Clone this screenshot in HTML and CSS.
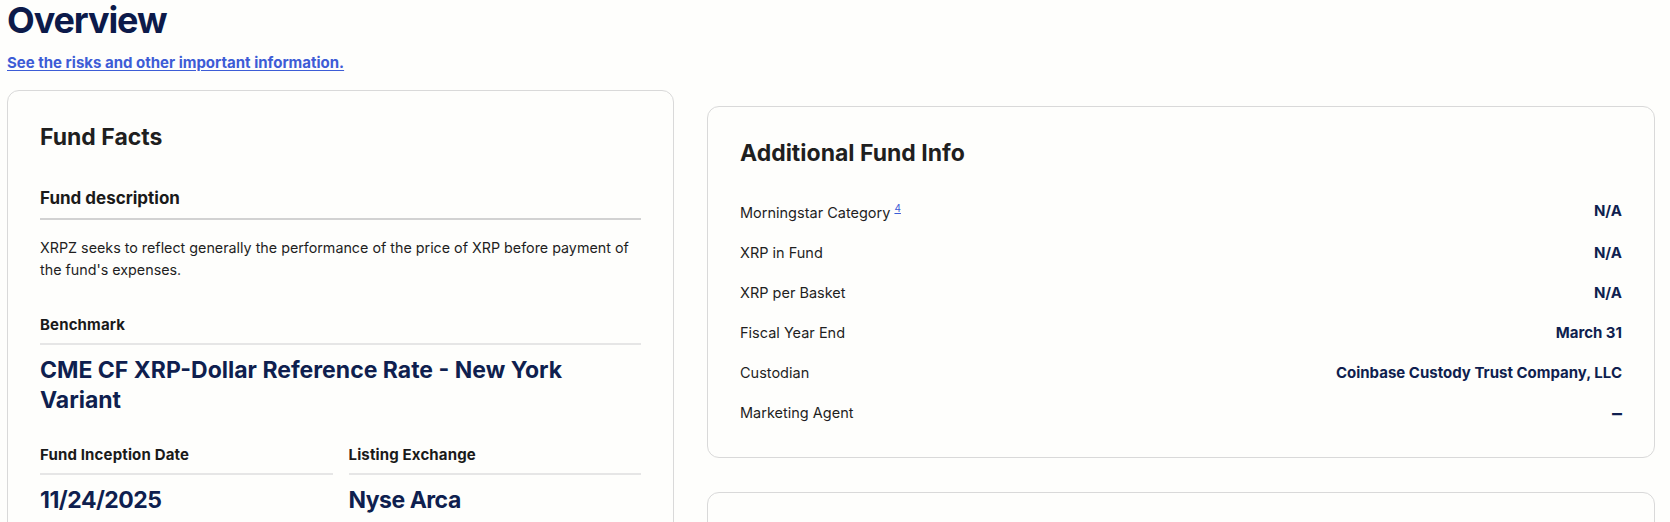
FILE: index.html
```html
<!DOCTYPE html>
<html lang="en">
<head>
<meta charset="utf-8">
<title>Overview</title>
<link rel="stylesheet" href="styles.css">
</head>
<body>
<main class="page">
  <h1 class="page-title">Overview</h1>
  <a class="risk-link" href="#">See the risks and other important information.</a>
  <div class="columns">
    <section class="card facts">
      <h2 class="card-title">Fund Facts</h2>
      <h3 class="section-head">Fund description</h3>
      <p class="desc">XRPZ seeks to reflect generally the performance of the price of XRP before payment of the fund's expenses.</p>
      <div class="fact">
        <div class="fact-label">Benchmark</div>
        <div class="fact-value">CME CF XRP-Dollar Reference Rate - New York Variant</div>
      </div>
      <div class="fact-pair">
        <div class="fact">
          <div class="fact-label">Fund Inception Date</div>
          <div class="fact-value short">11/24/2025</div>
        </div>
        <div class="fact">
          <div class="fact-label">Listing Exchange</div>
          <div class="fact-value short">Nyse Arca</div>
        </div>
      </div>
    </section>
    <div class="side">
      <section class="card info">
        <h2 class="card-title">Additional Fund Info</h2>
        <div class="rows">
          <div class="row"><span class="row-label">Morningstar Category <a class="note" href="#">4</a></span><span class="row-value">N/A</span></div>
          <div class="row"><span class="row-label">XRP in Fund</span><span class="row-value">N/A</span></div>
          <div class="row"><span class="row-label">XRP per Basket</span><span class="row-value">N/A</span></div>
          <div class="row"><span class="row-label">Fiscal Year End</span><span class="row-value">March 31</span></div>
          <div class="row"><span class="row-label">Custodian</span><span class="row-value">Coinbase Custody Trust Company, LLC</span></div>
          <div class="row"><span class="row-label">Marketing Agent</span><span class="row-value dash">–</span></div>
        </div>
      </section>
      <section class="card next"></section>
    </div>
  </div>
</main>
</body>
</html>
```
FILE: styles.css
```css
* { box-sizing: border-box; }
html, body { margin: 0; padding: 0; }
body {
  background: #fefefc;
  font-family: Inter, "Noto Sans", "Liberation Sans", sans-serif;
  color: #1c1c1c;
  overflow: hidden;
}
.page {
  padding: 0 15px 0 7px;
}
.page-title {
  margin: 0;
  font-size: 36px;
  line-height: 40px;
  font-weight: 700;
  color: #0c1a4a;
  letter-spacing: -1.1px;
}
.risk-link {
  display: inline-block;
  margin-top: 13px;
  font-size: 15px;
  line-height: 20px;
  font-weight: 700;
  color: #3d5cd6;
  text-decoration: underline;
  text-underline-offset: 2px;
}
.columns {
  display: grid;
  grid-template-columns: 667px 948px;
  column-gap: 33px;
  margin-top: 17px;
  align-items: start;
}
.card {
  background: #fefefc;
  border: 1px solid #d9d9d9;
  border-radius: 12px;
  padding: 32px;
}
.card-title {
  margin: 0;
  font-size: 23px;
  line-height: 28px;
  font-weight: 700;
  color: #1f1f1f;
}
.facts {
  padding-bottom: 60px;
}
.section-head {
  margin: 35px 0 0;
  font-size: 17px;
  line-height: 24px;
  font-weight: 700;
  color: #1a1a1a;
  padding-bottom: 8px;
  border-bottom: 2px solid #d2d2d2;
}
.desc {
  margin: 17px 0 0;
  font-size: 14.3px;
  line-height: 22px;
  color: #1f1f1f;
}
.fact {
  margin-top: 34px;
}
.fact-label {
  font-size: 15px;
  line-height: 20px;
  font-weight: 700;
  color: #1a1a1a;
  letter-spacing: 0.15px;
  padding-bottom: 8px;
  border-bottom: 2px solid #e6e6e6;
}
.fact-value {
  margin-top: 10px;
  font-size: 23px;
  line-height: 30px;
  font-weight: 700;
  color: #0f1f4f;
  padding-right: 40px;
}
.fact-value.short {
  letter-spacing: -0.5px;
}
.fact-pair {
  display: grid;
  grid-template-columns: 1fr 1fr;
  column-gap: 16px;
}
.fact-pair .fact {
  margin-top: 30px;
}
.side {
  margin-top: 16px;
  display: flex;
  flex-direction: column;
  gap: 34px;
}
.info {
  padding-bottom: 24px;
}
.rows {
  margin-top: 21px;
}
.row {
  display: flex;
  justify-content: space-between;
  align-items: center;
  padding: 10px 0;
  line-height: 20px;
}
.row-label {
  font-size: 14.5px;
  color: #1f1f1f;
}
.row-value {
  font-size: 15px;
  font-weight: 700;
  color: #0f1f4f;
}
.row-value.dash {
  font-size: 20px;
}
.note {
  font-size: 10px;
  vertical-align: 6px;
  color: #3d5cd6;
  text-decoration: underline;
}
.next {
  height: 200px;
}
```
